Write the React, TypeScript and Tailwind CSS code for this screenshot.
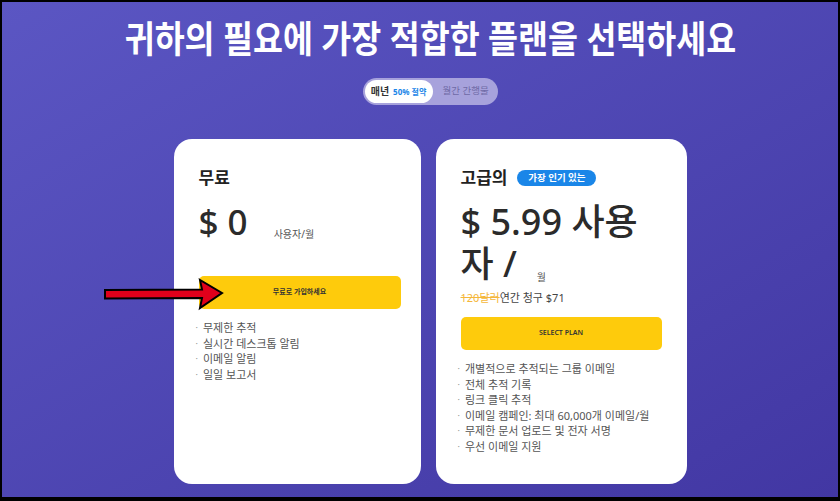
const KR = { fontFamily: '"Noto Sans", "Noto Sans CJK KR", sans-serif' };

const freeFeatures = ['무제한 추적', '실시간 데스크톱 알림', '이메일 알림', '일일 보고서'];

const proFeatures = [
  '개별적으로 추적되는 그룹 이메일',
  '전체 추적 기록',
  '링크 클릭 추적',
  '이메일 캠페인: 최대 60,000개 이메일/월',
  '무제한 문서 업로드 및 전자 서명',
  '우선 이메일 지원',
];

function FeatureList({ items }: { items: string[] }) {
  return (
    <ul className="flex flex-col">
      {items.map((item) => (
        <li key={item} className="ml-[-3px] flex items-center gap-[5px] text-[11px] leading-[15.5px] text-[#555]">
          <span className="text-[#999] text-[9px]">·</span>
          {item}
        </li>
      ))}
    </ul>
  );
}

function Arrow() {
  return (
    <svg className="absolute left-[100px] top-[274px]" width="126" height="36" viewBox="0 0 126 36">
      <path
        d="M3 14 L100 13.5 L98 4 L120 17 L98 32 L100 22 L3 22.5 Z"
        fill="#e0001b"
        stroke="#000"
        strokeWidth="2"
        strokeLinejoin="miter"
      />
    </svg>
  );
}

export default function App() {
  return (
    <div
      className="relative h-[501px] w-[840px] overflow-hidden border-t-2 border-l-2 border-r-2 border-b-4 border-black bg-linear-to-br from-[#5b56c3] to-[#4237a3]"
      style={KR}
    >
      <div className="flex flex-col items-center pl-[20px] pt-[15px]">
        <h1 className="scale-x-[0.88] whitespace-nowrap text-[37px] font-bold leading-[44px] text-white">
          귀하의 필요에 가장 적합한 플랜을 선택하세요
        </h1>

        <div className="mt-[17px] flex h-[27px] w-[135px] items-center rounded-full bg-[#a7a2dc] p-[2px]">
          <div className="flex h-[23px] w-[68px] items-center justify-center gap-[4px] rounded-full bg-white">
            <span className="text-[10px] font-bold text-[#333]">매년</span>
            <span className="text-[8px] font-bold text-[#1a86e8]">50% 절약</span>
          </div>
          <span className="ml-[10px] text-[9.5px] text-[#6f6aa6]">월간 간행물</span>
        </div>

        <div className="mt-[34px] flex gap-[15px]">
          <div className="flex h-[345px] w-[247px] flex-col rounded-[18px] bg-white pl-[25px] pr-[20px] pt-[28px]">
            <h3 className="text-[17px] font-bold leading-[22px] text-[#222]">무료</h3>
            <div className="mt-[12px] flex items-end">
              <span className="text-[35px] font-medium leading-[42px] text-[#2b2b2b]">$ 0</span>
              <span className="mb-[1px] ml-[26px] text-[10px] text-[#555]">사용자/월</span>
            </div>
            <button className="mt-[33px] h-[33px] w-full rounded-[5px] bg-[#fecb0c] text-[7px] font-semibold text-[#333]">
              무료로 가입하세요
            </button>
            <div className="mt-[11px]">
              <FeatureList items={freeFeatures} />
            </div>
          </div>

          <div className="flex h-[345px] w-[251px] flex-col rounded-[18px] bg-white px-[25px] pt-[28px]">
            <div className="flex items-center gap-[10px]">
              <h3 className="text-[17px] font-bold leading-[22px] text-[#222]">고급의</h3>
              <span className="flex h-[16px] w-[79px] items-center justify-center rounded-full bg-[#1a86e8] text-[9.5px] font-semibold text-white">
                가장 인기 있는
              </span>
            </div>
            <div className="mt-[12px] text-[36px] font-medium leading-[42px] text-[#2b2b2b]">
              $ 5.99 사용
              <br />
              자 /<span className="ml-[20px] align-[-4px] text-[10px] font-normal leading-none text-[#555]">월</span>
            </div>
            <div className="mt-[5px] text-[11px] leading-[16px] text-[#444]">
              <span className="text-[#f5b73a] line-through">120달러</span>연간 청구 $71
            </div>
            <button className="mt-[11px] h-[33px] w-full rounded-[5px] bg-[#fecb0c] text-[7px] font-semibold text-[#333]">
              SELECT PLAN
            </button>
            <div className="mt-[11px]">
              <FeatureList items={proFeatures} />
            </div>
          </div>
        </div>
      </div>
      <Arrow />
    </div>
  );
}
